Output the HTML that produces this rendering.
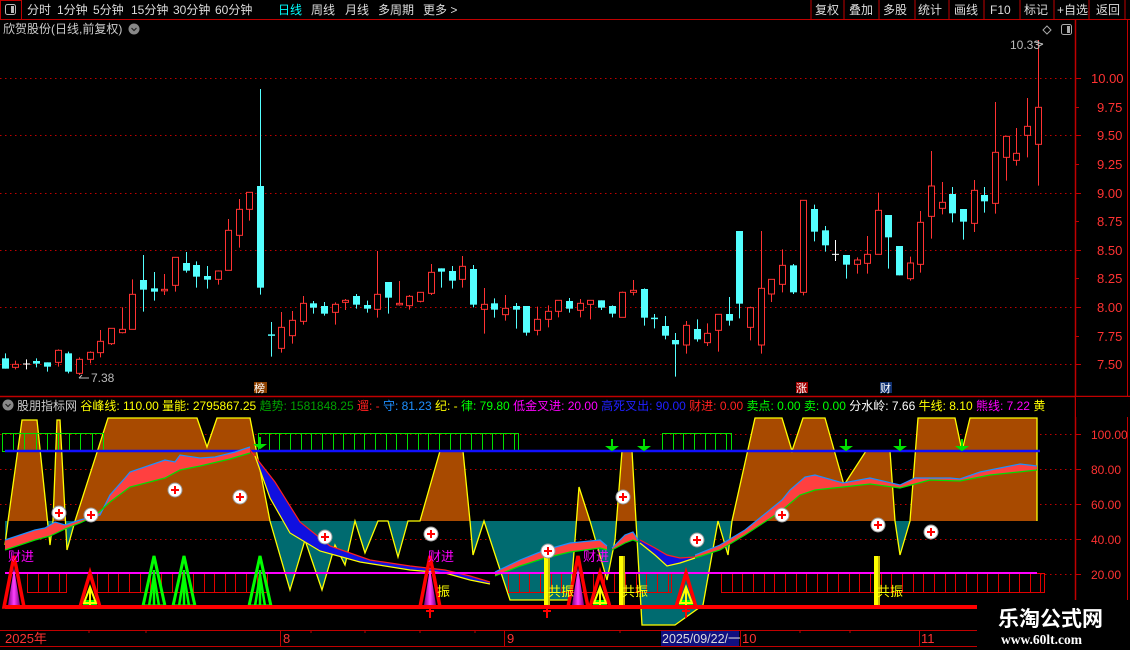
<!DOCTYPE html>
<html><head><meta charset="utf-8">
<style>
html,body{margin:0;padding:0;background:#000;width:1130px;height:650px;overflow:hidden}
svg{display:block}
text{font-family:"Liberation Sans","Noto Sans CJK SC","WenQuanYi Zen Hei",sans-serif;font-size:12px}
</style></head><body>
<svg id="s" width="1130" height="650" viewBox="0 0 1130 650" xmlns="http://www.w3.org/2000/svg">
<defs>
<clipPath id="up"><rect x="0" y="397" width="1130" height="124"/></clipPath>
<clipPath id="dn"><rect x="0" y="521" width="1130" height="108"/></clipPath>
<linearGradient id="mg" x1="0" x2="1" y1="0" y2="0"><stop offset="0" stop-color="#800080"/><stop offset="0.5" stop-color="#ff40ff"/><stop offset="1" stop-color="#800080"/></linearGradient>
</defs>
<rect width="1130" height="650" fill="#000"/>
<line x1="0" y1="19.5" x2="1130" y2="19.5" stroke="#c00000"/>
<rect x="0.5" y="0.5" width="21" height="19" fill="none" stroke="#c00000"/>
<rect x="5.5" y="4.5" width="10" height="10" rx="2" fill="none" stroke="#bbb"/><rect x="11" y="6" width="3" height="7" fill="#bbb"/>
<g fill="#ddd">
<text x="27" y="14">分时</text><text x="57" y="14">1分钟</text><text x="93" y="14">5分钟</text><text x="131" y="14">15分钟</text><text x="173" y="14">30分钟</text><text x="215" y="14">60分钟</text>
<text x="278" y="14" fill="#00ffff">日线</text><text x="311" y="14">周线</text><text x="345" y="14">月线</text><text x="378" y="14">多周期</text><text x="423" y="14">更多 &gt;</text>
<text x="815" y="14">复权</text><text x="849" y="14">叠加</text><text x="883" y="14">多股</text><text x="918" y="14">统计</text><text x="954" y="14">画线</text><text x="990" y="14">F10</text><text x="1024" y="14">标记</text><text x="1057" y="14">+自选</text><text x="1096" y="14">返回</text>
</g>
<g stroke="#c00000"><line x1="811" y1="0" x2="811" y2="19"/><line x1="844" y1="0" x2="844" y2="19"/><line x1="879" y1="0" x2="879" y2="19"/><line x1="915" y1="0" x2="915" y2="19"/><line x1="949" y1="0" x2="949" y2="19"/><line x1="984" y1="0" x2="984" y2="19"/><line x1="1020" y1="0" x2="1020" y2="19"/><line x1="1054" y1="0" x2="1054" y2="19"/><line x1="1089" y1="0" x2="1089" y2="19"/><line x1="1125" y1="0" x2="1125" y2="19"/></g>
<text x="3" y="33" fill="#ccc">欣贺股份(日线,前复权)</text>
<circle cx="134" cy="29" r="5.5" fill="#888"/><path d="M131.5 28l2.5 2.5 2.5-2.5" stroke="#222" fill="none" stroke-width="1.2"/>
<path d="M1047 26l4 4-4 4-4-4z" fill="none" stroke="#aaa"/>
<rect x="1061.5" y="24.5" width="10" height="10" rx="2" fill="none" stroke="#aaa"/><rect x="1067" y="26" width="3" height="7" fill="#aaa"/>
<line x1="1075.5" y1="20" x2="1075.5" y2="600" stroke="#c00000" stroke-width="1.5"/>
<line x1="1127.5" y1="20" x2="1127.5" y2="600" stroke="#c00000"/>
<g stroke="#c00000" stroke-dasharray="1.5,3.5">
<line x1="0" y1="78.5" x2="1075" y2="78.5"/><line x1="0" y1="135.5" x2="1075" y2="135.5"/><line x1="0" y1="193.5" x2="1075" y2="193.5"/><line x1="0" y1="250.5" x2="1075" y2="250.5"/><line x1="0" y1="307.5" x2="1075" y2="307.5"/><line x1="0" y1="364.5" x2="1075" y2="364.5"/>
</g>
<g fill="#ff3232">
<text x="1091" y="83" style="font-size:13px">10.00</text><text x="1097" y="112" style="font-size:13px">9.75</text><text x="1097" y="140" style="font-size:13px">9.50</text><text x="1097" y="169" style="font-size:13px">9.25</text><text x="1097" y="198" style="font-size:13px">9.00</text><text x="1097" y="226" style="font-size:13px">8.75</text><text x="1097" y="255" style="font-size:13px">8.50</text><text x="1097" y="283" style="font-size:13px">8.25</text><text x="1097" y="312" style="font-size:13px">8.00</text><text x="1097" y="341" style="font-size:13px">7.75</text><text x="1097" y="369" style="font-size:13px">7.50</text>
</g>
<g stroke="#c00000"><line x1="1075" y1="78.5" x2="1081" y2="78.5"/><line x1="1075" y1="107.5" x2="1079" y2="107.5"/><line x1="1075" y1="135.5" x2="1081" y2="135.5"/><line x1="1075" y1="164.5" x2="1079" y2="164.5"/><line x1="1075" y1="193.5" x2="1081" y2="193.5"/><line x1="1075" y1="221.5" x2="1079" y2="221.5"/><line x1="1075" y1="250.5" x2="1081" y2="250.5"/><line x1="1075" y1="278.5" x2="1079" y2="278.5"/><line x1="1075" y1="307.5" x2="1081" y2="307.5"/><line x1="1075" y1="336.5" x2="1079" y2="336.5"/><line x1="1075" y1="364.5" x2="1081" y2="364.5"/></g>
<g id="candles"></g>
<text x="91" y="382" fill="#bbb">7.38</text><path d="M89 378h-10m3-3l-3 3" stroke="#bbb" fill="none"/>
<text x="1010" y="49" fill="#bbb">10.33</text><path d="M1043 44l-8-2m8 2l-4 2" stroke="#bbb" fill="none"/>
<rect x="254" y="382" width="13" height="11" fill="#8b4000"/><text x="254" y="392" fill="#fff" style="font-size:11px">榜</text>
<rect x="796" y="382" width="12" height="11" fill="#a00000"/><text x="796" y="392" fill="#fff" style="font-size:11px">涨</text>
<rect x="880" y="382" width="12" height="11" fill="#103070"/><text x="880" y="392" fill="#fff" style="font-size:11px">财</text>
<line x1="0" y1="396.5" x2="1130" y2="396.5" stroke="#c00000" stroke-width="1.5"/>
<circle cx="8" cy="405" r="5.5" fill="#888"/><path d="M5.5 404l2.5 2.5 2.5-2.5" stroke="#222" fill="none" stroke-width="1.2"/>
<text x="17" y="410" style="font-size:12px"><tspan fill="#ccc">股朋指标网 </tspan><tspan fill="#ffff00">谷峰线: 110.00 量能: 2795867.25 </tspan><tspan fill="#00a000">趋势: 1581848.25 </tspan><tspan fill="#ff2020">遛: - </tspan><tspan fill="#1e90ff">守: 81.23 </tspan><tspan fill="#ffff00">纪: - </tspan><tspan fill="#00ff00">律: 79.80 </tspan><tspan fill="#ff00ff">低金叉进: 20.00 </tspan><tspan fill="#2020ff">高死叉出: 90.00 </tspan><tspan fill="#ff2020">财进: 0.00 </tspan><tspan fill="#00ff00">卖点: 0.00 卖: 0.00 </tspan><tspan fill="#fff">分水岭: 7.66 </tspan><tspan fill="#ffff00">牛线: 8.10 </tspan><tspan fill="#ff00ff">熊线: 7.22 </tspan><tspan fill="#ffff00">黄</tspan></text>
<rect x="1076" y="397" width="54" height="20" fill="#000"/>
<g stroke="#c00000" stroke-dasharray="1.5,3.5">
<line x1="0" y1="434.5" x2="1075" y2="434.5"/><line x1="0" y1="469.5" x2="1075" y2="469.5"/><line x1="0" y1="504.5" x2="1075" y2="504.5"/><line x1="0" y1="539.5" x2="1075" y2="539.5"/><line x1="1040" y1="574.5" x2="1075" y2="574.5"/>
</g>
<g fill="#ff3232"><text x="1091" y="439">100.00</text><text x="1091" y="474">80.00</text><text x="1091" y="509">60.00</text><text x="1091" y="544">40.00</text><text x="1091" y="579">20.00</text></g>
<g stroke="#c00000"><line x1="1075" y1="434.5" x2="1081" y2="434.5"/><line x1="1075" y1="469.5" x2="1081" y2="469.5"/><line x1="1075" y1="504.5" x2="1081" y2="504.5"/><line x1="1075" y1="539.5" x2="1081" y2="539.5"/><line x1="1075" y1="574.5" x2="1081" y2="574.5"/></g>
<g id="wave"></g>
<g stroke="#00e000" fill="none" id="gbox"></g>
<line x1="5" y1="451" x2="1040" y2="451" stroke="#1010ff" stroke-width="2.5"/>
<g id="ribbon"></g>
<g stroke="#e00000" fill="none" id="rbox"></g>
<line x1="5" y1="573" x2="1037" y2="573" stroke="#ff00ff" stroke-width="2"/>
<g id="tri"></g>
<line x1="5" y1="607" x2="977" y2="607" stroke="#ff0000" stroke-width="4"/>
<g id="plus"></g>
<g fill="#ff00ff"><text x="8" y="561" style="font-size:13px">财进</text><text x="428" y="561" style="font-size:13px">财进</text><text x="583" y="561" style="font-size:13px">财进</text></g>
<g fill="#ffff00"><text x="437" y="596" style="font-size:13px">振</text><text x="548" y="596" style="font-size:13px">共振</text><text x="622" y="596" style="font-size:13px">共振</text><text x="877" y="596" style="font-size:13px">共振</text></g>
<line x1="0" y1="630.5" x2="977" y2="630.5" stroke="#c00000"/>
<line x1="0" y1="646.5" x2="977" y2="646.5" stroke="#c00000"/>
<g stroke="#c00000"><line x1="89" y1="630" x2="89" y2="633"/><line x1="146" y1="630" x2="146" y2="633"/><line x1="280.5" y1="630" x2="280.5" y2="646"/><line x1="311" y1="630" x2="311" y2="633"/><line x1="365" y1="630" x2="365" y2="633"/><line x1="420" y1="630" x2="420" y2="633"/><line x1="475" y1="630" x2="475" y2="633"/><line x1="504.5" y1="630" x2="504.5" y2="646"/><line x1="620" y1="630" x2="620" y2="633"/><line x1="740.5" y1="630" x2="740.5" y2="646"/><line x1="800" y1="630" x2="800" y2="633"/><line x1="850" y1="630" x2="850" y2="633"/><line x1="919.5" y1="630" x2="919.5" y2="646"/></g>
<g fill="#ff3232"><text x="5" y="643" style="font-size:13px">2025年</text><text x="283" y="643" style="font-size:13px">8</text><text x="507" y="643" style="font-size:13px">9</text><text x="742" y="643" style="font-size:13px">10</text><text x="921" y="643" style="font-size:13px">11</text></g>
<rect x="661" y="631" width="78" height="15" fill="#101080"/><text x="662" y="643" fill="#ddd" style="font-size:12.5px">2025/09/22/一</text>
<text x="998" y="626" fill="#fff" style="font-size:21px;font-weight:bold">乐淘公式网</text>
<text x="1001" y="644" fill="#fff" style="font-size:13.5px;font-weight:bold;font-family:'Liberation Serif',serif">www.60lt.com</text>
</svg>
<script>
var NS="http://www.w3.org/2000/svg";
function el(p,t,a){var e=document.createElementNS(NS,t);for(var k in a)e.setAttribute(k,a[k]);p.appendChild(e);return e;}
var A=[[835,866,820,866,'c'],[853,862,842,868,'r'],[852,854,838,868,'w'],[843,851,835,862,'c'],[847,860,847,875,'c'],[811,847,808,860,'r'],[820,875,815,880,'c'],[838,880,832,885,'r'],[817,838,814,850,'r'],[784,818,750,832,'r'],[745,791,745,795,'r'],[748,758,682,760,'r'],[643,748,598,748,'r'],[600,629,525,695,'c'],[625,635,576,662,'c'],[628,632,582,645,'r'],[532,616,532,635,'r'],[549,572,516,578,'c'],[555,590,544,623,'c'],[588,599,558,626,'c'],[573,598,571,614,'r'],[451,571,417,571,'r'],[388,466,357,503,'r'],[337,388,337,422,'r'],[318,623,27,644,'c'],[763,767,726,830,'c'],[742,805,696,818,'r'],[721,767,693,791,'r'],[670,724,648,734,'r'],[670,683,663,701,'c'],[678,701,666,707,'c'],[673,697,667,734,'r'],[661,667,657,690,'r'],[648,674,642,686,'c'],[675,686,662,698,'c'],[643,688,513,713,'r'],[606,653,606,701,'c'],[670,674,603,677,'r'],[649,677,645,689,'r'],[637,664,637,667,'r'],[577,640,552,645,'r'],[565,575,565,623,'c'],[573,602,558,626,'c'],[559,598,528,623,'r'],[567,674,555,682,'c'],[673,688,624,761,'r'],[670,689,655,713,'c'],[685,704,645,722,'r'],[678,689,669,746,'c'],[678,758,678,767,'c']];
var B=[[838,871,800,886,'r'],[814,838,796,862,'r'],[781,814,781,832,'r'],[783,806,774,818,'c'],[790,811,777,832,'r'],[781,793,781,838,'r'],[781,803,781,810,'c'],[798,821,796,832,'c'],[757,832,755,832,'r'],[751,757,720,766,'r'],[747,833,745,857,'c'],[833,837,822,865,'c'],[858,887,828,898,'c'],[900,913,879,1010,'c'],[856,915,843,941,'r'],[867,898,838,905,'c'],[880,908,850,918,'r'],[823,871,823,935,'r'],[822,842,771,857,'c'],[573,791,573,835,'c'],[803,862,800,901,'r'],[745,915,573,941,'r'],[718,762,718,786,'r'],[676,733,628,757,'r'],[676,757,672,762,'c'],[481,757,481,766,'r'],[507,575,494,604,'c'],[571,616,558,635,'c'],[643,646,600,663,'w'],[645,674,645,716,'c'],[660,673,652,701,'r'],[643,670,588,701,'r'],[511,643,458,643,'r'],[525,592,525,686,'c'],[618,706,618,706,'c'],[669,716,650,722,'r'],[547,673,513,698,'r'],[438,529,333,596,'r'],[487,505,426,523,'r'],[462,520,441,547,'c'],[507,545,507,599,'c'],[451,550,420,576,'r'],[465,484,441,518,'c'],[337,490,186,521,'r'],[289,352,289,422,'r'],[340,361,264,377,'r'],[259,286,174,352,'r'],[202,313,0,437,'r']];
var g=document.getElementById('candles');
function draw(arr,off,i0){arr.forEach(function(d,j){var i=i0+j,x=Math.round(4.5+i*10.65)+0.5;var t=off+d[0]/3,b=off+d[1]/3,wt=off+d[2]/3,wb=off+d[3]/3;var col=d[4]=='r'?'#ff3232':(d[4]=='c'?'#54ffff':'#fff');
el(g,'line',{x1:x,y1:wt,x2:x,y2:wb,stroke:col});
if(d[4]=='w'){el(g,'line',{x1:x-3.5,y1:t,x2:x+3.5,y2:t,stroke:col});return;}
var h=Math.max(b-t,1.5);
if(d[4]=='r')el(g,'rect',{x:x-3,y:t,width:6,height:h,fill:'#000',stroke:col});
else el(g,'rect',{x:x-3.5,y:t,width:7,height:h,fill:col});});}
draw(A,80,0);draw(B,40,50);
var W=[[5,545],[8,521],[22,420],[37,420],[50,545],[53,521],[57,420],[60,420],[67,550],[75,521],[108,418],[197,418],[207,447],[217,418],[250,418],[270,521],[290,590],[305,540],[322,590],[335,545],[345,565],[355,521],[365,553],[378,521],[388,521],[398,557],[408,521],[420,521],[440,451],[463,451],[470,521],[473,555],[484,521],[510,600],[570,600],[575,540],[579,487],[590,521],[607,580],[615,540],[622,451],[632,451],[636,521],[642,625],[675,625],[703,605],[718,521],[728,555],[732,521],[755,418],[782,418],[792,451],[803,418],[825,418],[844,485],[866,451],[890,451],[895,521],[900,555],[910,521],[918,418],[955,418],[962,451],[970,418],[1037,418],[1037,521]];
var ps=W.map(function(p){return p.join(',')}).join(' ');
var wv=document.getElementById('wave');
var poly='5,521 '+ps;
el(wv,'polygon',{points:poly,fill:'#a84a00','clip-path':'url(#up)'});
el(wv,'polygon',{points:poly,fill:'#006b70','clip-path':'url(#dn)'});
el(wv,'polyline',{points:ps,fill:'none',stroke:'#ffff00','stroke-width':1.3});
var gb=document.getElementById('gbox');
function box(p,x1,x2,y1,y2,st){el(p,'rect',{x:x1+.5,y:y1+.5,width:x2-x1,height:y2-y1});for(var x=x1+st;x<x2;x+=st)el(p,'line',{x1:Math.round(x)+.5,y1:y1,x2:Math.round(x)+.5,y2:y2});}
box(gb,2,103,433,451,11.2);box(gb,258,518,433,451,10.65);box(gb,662,731,433,451,10.65);
var rb=document.getElementById('ribbon');
function rib(up,lo,fill,c1,c2){var pts=up.concat(lo.slice().reverse()).map(function(p){return p.join(',')}).join(' ');el(rb,'polygon',{points:pts,fill:fill});el(rb,'polyline',{points:up.map(function(p){return p.join(',')}).join(' '),fill:'none',stroke:c1,'stroke-width':1.2});el(rb,'polyline',{points:lo.map(function(p){return p.join(',')}).join(' '),fill:'none',stroke:c2,'stroke-width':1.2});}
rib([[5,540],[35,530],[45,528],[55,522],[65,525],[80,520],[100,515],[110,495],[125,478],[130,472],[165,460],[175,462],[180,455],[200,458],[215,457],[235,452],[250,447]],[[5,550],[35,540],[50,536],[65,529],[80,523],[95,516],[110,502],[130,487],[165,478],[180,470],[200,466],[230,459],[250,453]],'#ff4040','#1e90ff','#00e000');
rib([[250,450],[275,482],[300,522],[330,546],[370,560],[410,566],[445,570],[470,576],[490,582]],[[255,456],[270,498],[290,533],[320,551],[360,562],[410,570],[445,573],[470,580],[490,584]],'#1010e0','#ff2020','#ffff00');
rib([[495,572],[520,560],[545,550],[570,543],[600,540],[607,546]],[[495,576],[520,566],[545,558],[570,552],[600,548],[607,550]],'#ff4040','#1e90ff','#00e000');
rib([[612,548],[625,535],[633,532],[638,540]],[[612,550],[625,543],[633,540],[638,542]],'#ff4040','#1e90ff','#00e000');
rib([[640,540],[655,548],[667,555],[680,558],[695,557]],[[640,543],[655,555],[667,566],[680,563],[695,558]],'#1010e0','#ff2020','#ffff00');
rib([[695,555],[720,545],[745,530],[782,500],[790,490],[805,477],[815,475],[843,483],[870,478],[900,485],[915,478],[950,478],[960,479],[980,472],[1000,468],[1020,464],[1037,466]],[[695,558],[720,550],[745,535],[780,512],[800,495],[815,490],[843,487],[870,484],[900,488],[930,480],[960,481],[990,475],[1037,470]],'#ff4040','#1e90ff','#00e000');
var rx=document.getElementById('rbox');
box(rx,27,66,573,592,10.65);box(rx,97,267,573,592,10.65);box(rx,508,671,573,592,10.65);box(rx,721,1044,573,592,10.65);
var tr=document.getElementById('tri');
function ytri(cx){el(tr,'rect',{x:cx-7,y:600,width:14,height:6,fill:'#00ff00'});el(tr,'polygon',{points:(cx-6)+',603 '+cx+',587 '+(cx+6)+',603',fill:'none',stroke:'#ffff00','stroke-width':2});el(tr,'line',{x1:cx,y1:587,x2:cx,y2:605,stroke:'#ffff00','stroke-width':2});}
function rtri(cx,top,mag,yel){if(mag)el(tr,'polygon',{points:(cx-6)+',605 '+cx+',568 '+(cx+6)+',605',fill:'url(#mg)'});if(yel)ytri(cx);el(tr,'polygon',{points:(cx-10)+',607 '+cx+','+top+' '+(cx+10)+',607',fill:'none',stroke:'#ff0000','stroke-width':3.5});}
function gtri(cx){el(tr,'polygon',{points:(cx-11)+',606 '+cx+',556 '+(cx+11)+',606',fill:'none',stroke:'#00ff00','stroke-width':3});el(tr,'polygon',{points:(cx-5)+',606 '+cx+',575 '+(cx+5)+',606',fill:'none',stroke:'#00ff00','stroke-width':2.5});el(tr,'line',{x1:cx,y1:570,x2:cx,y2:606,stroke:'#00ff00','stroke-width':2.5});}
[154,184,260].forEach(gtri);
rtri(14,556,1,0);rtri(90,573,0,1);rtri(430,556,1,0);rtri(578,556,1,0);rtri(600,573,0,1);rtri(686,573,0,1);
[547,622,877].forEach(function(x){el(tr,'rect',{x:x-3,y:556,width:6,height:51,fill:'#ffff00'});el(tr,'line',{x1:x+2,y1:556,x2:x+2,y2:607,stroke:'#b0a000','stroke-width':1.5});});
[430,547,686].forEach(function(x){el(tr,'path',{d:'M'+(x-4)+' 611h8M'+x+' 609v9',stroke:'#ff0000','stroke-width':2});});
[[260,444],[612,446],[644,446],[846,446],[900,446],[962,446]].forEach(function(p){el(tr,'path',{d:'M'+p[0]+' '+(p[1]-7)+'v9M'+(p[0]-4)+' '+(p[1]+1)+'h8l-4 3z',stroke:'#00e000',fill:'#00e000','stroke-width':2});});
var pl=document.getElementById('plus');
[[59,513],[91,515],[175,490],[240,497],[325,537],[431,534],[548,551],[623,497],[697,540],[782,515],[878,525],[931,532]].forEach(function(p){el(pl,'circle',{cx:p[0],cy:p[1],r:7,fill:'#fff',stroke:'#999','stroke-width':1});el(pl,'path',{d:'M'+(p[0]-4)+' '+p[1]+'h8M'+p[0]+' '+(p[1]-4)+'v8',stroke:'#ff0000','stroke-width':2});});
</script>
</body></html>
